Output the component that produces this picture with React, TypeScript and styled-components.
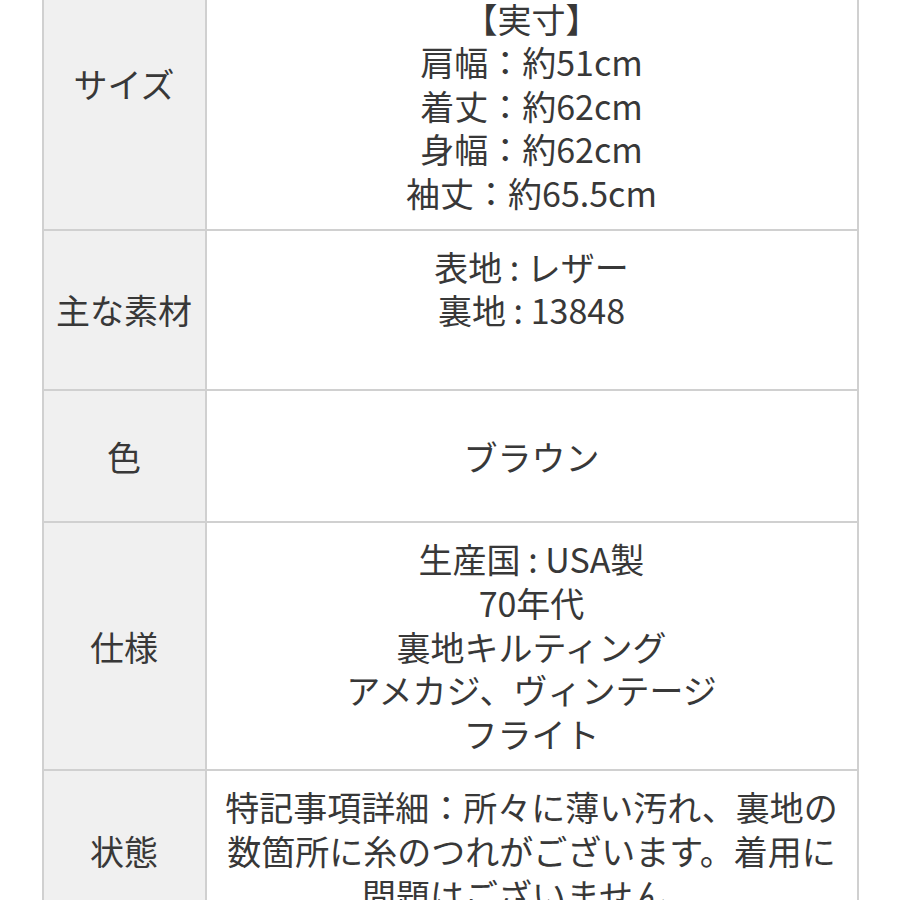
import React from "react";
import styled, {createGlobalStyle} from "styled-components";

const GlobalStyle = createGlobalStyle`
  html, body {
    margin: 0;
    padding: 0;
    background: #ffffff;
  }

  body {
    font-family: "Noto Sans CJK JP", "Noto Sans", sans-serif;
    color: #383838;
    overflow: hidden;
  }
`

interface Spec {
    label: string;
    lines?: string[];
    text?: string;
    minH?: number;
}

const specs: Spec[] = [
    {
        label: "サイズ",
        lines: ["", "【実寸】", "肩幅：約51cm", "着丈：約62cm", "身幅：約62cm", "袖丈：約65.5cm"],
    },
    {label: "主な素材", lines: ["表地 : レザー", "裏地 : 13848", ""]},
    {label: "色", lines: ["ブラウン"], minH: 130},
    {label: "仕様", lines: ["生産国 : USA製", "70年代", "裏地キルティング", "アメカジ、ヴィンテージ", "フライト"]},
    {
        label: "状態",
        text: "特記事項詳細：所々に薄い汚れ、裏地の数箇所に糸のつれがございます。着用に問題はございません。",
    },
]

const App = () => {
    return (
        <>
            <GlobalStyle/>
            <Table>
                {specs.map((s) => (
                    <Row key={s.label} $minH={s.minH}>
                        <Label>{s.label}</Label>
                        <Value>
                            {s.lines
                                ? s.lines.map((l, i) => <Line key={i}>{l}</Line>)
                                : <Line>{s.text}</Line>}
                        </Value>
                    </Row>
                ))}
            </Table>
        </>
    );
}

const Table = styled.div`
  width: 813px;
  margin: -63px auto 0;
  display: flex;
  flex-direction: column;
  border-left: 2px solid #d0d0d0;
  border-right: 2px solid #d0d0d0;
  border-top: 2px solid #d0d0d0;
`

const Row = styled.div<{ $minH?: number }>`
  display: grid;
  grid-template-columns: 163px 1fr;
  min-height: ${(p) => (p.$minH ? `${p.$minH}px` : "auto")};
  border-bottom: 2px solid #d0d0d0;
`

const Label = styled.div`
  display: flex;
  align-items: center;
  justify-content: center;
  background: #f0f0f0;
  border-right: 2px solid #d0d0d0;
  font-size: 34px;
  line-height: 43.6px;
`

const Value = styled.div`
  display: flex;
  flex-direction: column;
  justify-content: center;
  padding: 14px 10px;
  text-align: center;
  font-size: 34px;
  line-height: 43.6px;
`

const Line = styled.div`
  min-height: 43.6px;
`

export default App;
